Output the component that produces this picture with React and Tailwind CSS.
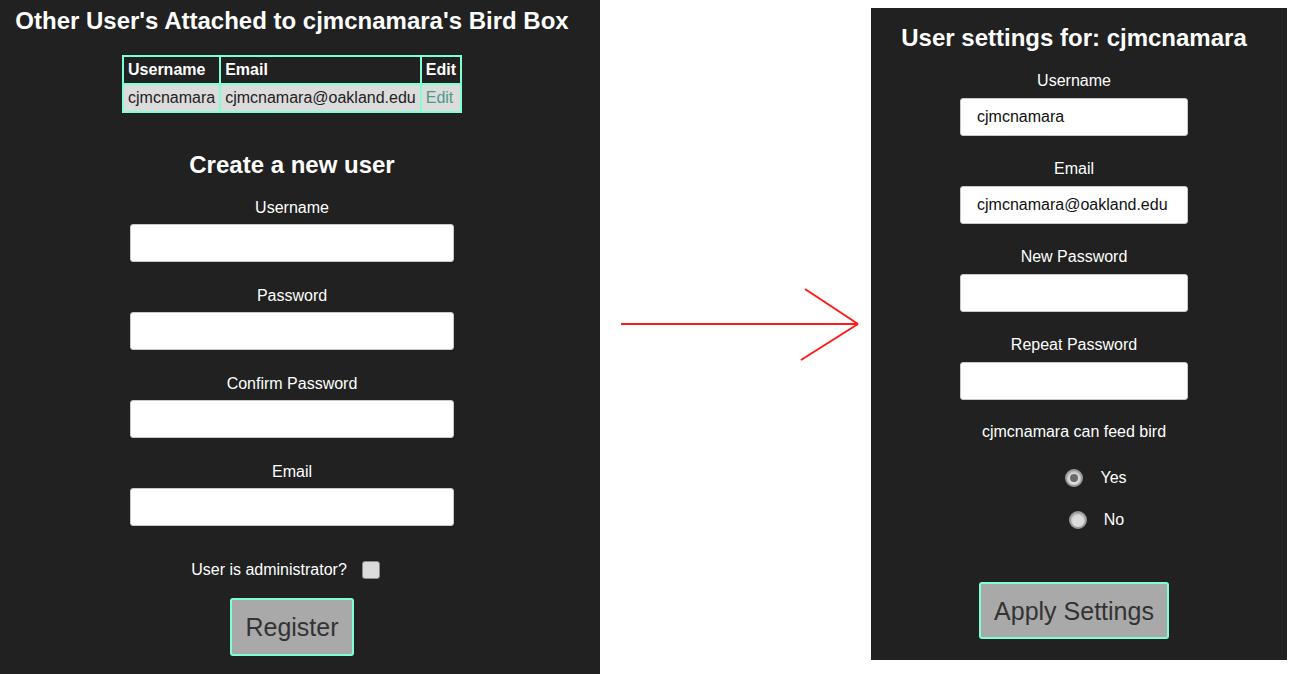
import React from "react";

const font = { fontFamily: '"Liberation Sans", Arial, sans-serif' };

function Field({ label, value = "", wide }) {
  return (
    <div className="flex flex-col items-center">
      <div className="text-[16px] leading-[18px] text-white">{label}</div>
      <div
        className={
          "h-[38px] rounded-[3px] border border-[#c8c8c8] bg-white flex items-center text-[16px] text-[#111] " +
          (wide ? "mt-[7px] w-[324px] px-[16px]" : "mt-[8px] w-[228px] px-[16px]")
        }
      >
        {value}
      </div>
    </div>
  );
}

function Radio({ checked, label, offset }) {
  return (
    <div className={"flex items-center justify-center h-[18px] " + offset}>
      <span className="w-[18px] h-[18px] rounded-full border-2 border-[#9a9a9a] bg-[#dcdcdc] flex items-center justify-center shadow-[inset_0_1px_2px_rgba(0,0,0,0.25)]">
        {checked && <span className="w-[8px] h-[8px] rounded-full bg-[#6b6b6b]" />}
      </span>
      <span className="ml-[17px] text-[16px] leading-[18px] text-white">{label}</span>
    </div>
  );
}

export default function App() {
  return (
    <div className="w-[1300px] h-[674px] bg-white flex" style={font}>
      {/* Left panel */}
      <div className="w-[600px] h-[674px] bg-[#202120] flex flex-col items-center pr-[16px] pt-[7px]">
        <h2 className="text-[24px] leading-[28px] font-bold text-white">
          Other User's Attached to cjmcnamara's Bird Box
        </h2>
        <table className="mt-[20px] border-collapse border-2 border-[#7fffd4] text-[16px] leading-[18px]">
          <thead>
            <tr className="bg-[#202120] text-white font-bold text-left">
              <th className="border-2 border-[#7fffd4] px-[4px] py-[4px] font-bold">Username</th>
              <th className="border-2 border-[#7fffd4] px-[4px] py-[4px] font-bold">Email</th>
              <th className="border-2 border-[#7fffd4] px-[4px] py-[4px] font-bold">Edit</th>
            </tr>
          </thead>
          <tbody>
            <tr className="bg-[#dcdcdc] text-[#222]">
              <td className="border-2 border-[#7fffd4] px-[4px] py-[4px]">cjmcnamara</td>
              <td className="border-2 border-[#7fffd4] px-[4px] py-[4px]">cjmcnamara@oakland.edu</td>
              <td className="border-2 border-[#7fffd4] px-[4px] py-[4px] text-[#4a9a8a]">Edit</td>
            </tr>
          </tbody>
        </table>
        <h2 className="mt-[38px] text-[24px] leading-[28px] font-bold text-white">Create a new user</h2>
        <div className="mt-[20px] flex flex-col gap-[25px]">
          <Field label="Username" wide />
          <Field label="Password" wide />
          <Field label="Confirm Password" wide />
          <Field label="Email" wide />
        </div>
        <div className="mt-[35px] flex items-center h-[18px] pr-[13px]">
          <span className="text-[16px] leading-[18px] text-white">User is administrator?</span>
          <span className="ml-[15px] w-[18px] h-[18px] rounded-[3px] border border-[#8a8a8a] bg-[#dcdcdc]" />
        </div>
        <button className="mt-[19px] h-[58px] px-[13px] rounded-[3px] border-2 border-[#7fffd4] bg-[#a9a9a9] text-[25px] leading-[30px] text-[#333]">
          Register
        </button>
      </div>

      {/* Arrow */}
      <div className="w-[271px] h-[674px]">
        <svg width="271" height="674" viewBox="0 0 271 674">
          <line x1="21" y1="324" x2="258" y2="324" stroke="#ff1a1a" strokeWidth="2" />
          <line x1="205" y1="289" x2="258" y2="324" stroke="#ff1a1a" strokeWidth="2" />
          <line x1="201" y1="360" x2="258" y2="324" stroke="#ff1a1a" strokeWidth="2" />
        </svg>
      </div>

      {/* Right panel */}
      <div className="mt-[8px] w-[416px] h-[652px] bg-[#202120] flex flex-col items-center pr-[10px] pt-[16px]">
        <h2 className="text-[24px] leading-[28px] font-bold text-white">User settings for: cjmcnamara</h2>
        <div className="mt-[20px] flex flex-col gap-[24px]">
          <Field label="Username" value="cjmcnamara" />
          <Field label="Email" value="cjmcnamara@oakland.edu" />
          <Field label="New Password" />
          <Field label="Repeat Password" />
        </div>
        <div className="mt-[23px] text-[16px] leading-[18px] text-white">cjmcnamara can feed bird</div>
        <div className="mt-[28px] flex flex-col gap-[24px]">
          <Radio checked label="Yes" offset="ml-[44px]" />
          <Radio label="No" offset="ml-[45px]" />
        </div>
        <button className="mt-[53px] h-[57px] px-[13px] rounded-[3px] border-2 border-[#7fffd4] bg-[#a9a9a9] text-[25px] leading-[30px] text-[#333]">
          Apply Settings
        </button>
      </div>
    </div>
  );
}
